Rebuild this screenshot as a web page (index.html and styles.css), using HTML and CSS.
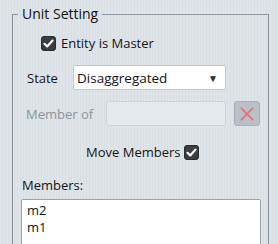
FILE: index.html
```html
<!DOCTYPE html>
<html lang="en">
<head>
    <meta charset="UTF-8">
    <title>Unit Setting</title>
    <link rel="stylesheet" href="styles.css">
</head>
<body>
    <fieldset class="unit-setting">
        <legend>Unit Setting</legend>

        <div class="row master-row">
            <span class="check checked">
                <svg viewBox="0 0 15 15" width="15" height="15"><path d="M3.5 7.8 L6.2 10.4 L11.5 4.6" fill="none" stroke="#fff" stroke-width="2.2" stroke-linecap="round" stroke-linejoin="round"/></svg>
            </span>
            <span class="label">Entity is Master</span>
        </div>

        <div class="row state-row">
            <span class="label field-label">State</span>
            <div class="select">
                <span>Disaggregated</span>
                <span class="arrow">&#9660;</span>
            </div>
        </div>

        <div class="row member-row">
            <span class="label field-label disabled">Member of</span>
            <div class="input disabled-input"></div>
            <button class="clear-btn" disabled>
                <svg viewBox="0 0 26 24" width="26" height="24"><path d="M7 6 L19 18 M19 6 L7 18" stroke="#e2737d" stroke-width="2" stroke-linecap="round"/></svg>
            </button>
        </div>

        <div class="row move-row">
            <span class="label">Move Members</span>
            <span class="check checked">
                <svg viewBox="0 0 15 15" width="15" height="15"><path d="M3.5 7.8 L6.2 10.4 L11.5 4.6" fill="none" stroke="#fff" stroke-width="2.2" stroke-linecap="round" stroke-linejoin="round"/></svg>
            </span>
        </div>

        <div class="members-label">Members:</div>
        <ul class="members-list">
            <li>m2</li>
            <li>m1</li>
        </ul>
    </fieldset>
</body>
</html>
```

FILE: styles.css
```css
body {
    margin: 0;
    font-family: "Open Sans", "Noto Sans", sans-serif;
    font-size: 13px;
    color: #141414;
    background: repeating-linear-gradient(90deg, #dfe4e9 0, #dfe4e9 2px, #d9dee4 2px, #d9dee4 3px);
    height: 244px;
    overflow: hidden;
}

.unit-setting {
    margin: 5px 9px 0 12px;
    padding: 0;
    border: 1px solid #8d949b;
    border-bottom: none;
    height: 260px;
    box-sizing: border-box;
    min-width: 0;
}

.unit-setting legend {
    margin-left: 5px;
    padding: 0 4px;
    font-size: 14px;
    line-height: 18px;
    color: #111;
}

.row {
    display: flex;
    align-items: center;
}

.label {
    line-height: 18px;
}

.check {
    display: inline-block;
    width: 15px;
    height: 15px;
    border-radius: 4px;
    background: #3b3d40;
    box-shadow: inset 0 0 0 1px #2a2b2d;
}

.check svg {
    display: block;
}

.master-row {
    margin-top: 11px;
    padding-left: 28px;
    gap: 5px;
}

.state-row {
    margin-top: 13px;
    padding-left: 14px;
}

.field-label {
    width: 46px;
}

.select {
    display: flex;
    align-items: center;
    justify-content: space-between;
    width: 153px;
    height: 25px;
    box-sizing: border-box;
    padding: 0 7px 0 3px;
    background: #fff;
    border: 1px solid #c3c8ce;
    border-radius: 2px;
    font-size: 13.5px;
}

.arrow {
    font-size: 10px;
    color: #2a2a2a;
}

.member-row {
    margin-top: 11px;
    padding-left: 13px;
}

.member-row .field-label {
    width: 80px;
}

.disabled {
    color: #8e9399;
}

.input {
    width: 120px;
    height: 25px;
    box-sizing: border-box;
    border-radius: 2px;
}

.disabled-input {
    background: #e5e9ed;
    border: 1px solid #cdd2d7;
}

.clear-btn {
    margin-left: 8px;
    width: 26px;
    height: 25px;
    padding: 0;
    border: 1px solid #a9b0b8;
    border-radius: 3px;
    background: #b9c0c7;
    display: flex;
    align-items: center;
    justify-content: center;
}

.move-row {
    margin-top: 17px;
    padding-left: 73px;
    gap: 4px;
}

.members-label {
    margin-top: 15px;
    padding-left: 9px;
    line-height: 18px;
}

.members-list {
    list-style: none;
    margin: 5px 0 0 8px;
    padding: 2px 5px;
    width: 240px;
    height: 60px;
    box-sizing: border-box;
    background: #fff;
    border: 1px solid #9aa1a8;
    border-radius: 2px;
}

.members-list li {
    line-height: 17px;
}
```
